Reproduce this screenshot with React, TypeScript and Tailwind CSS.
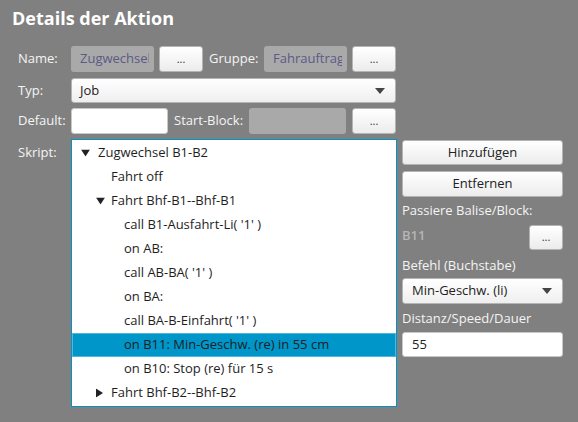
const font = { fontFamily: '"Open Sans", "Noto Sans", sans-serif' };

function DotsButton({ className = '' }: { className?: string }) {
  return (
    <button
      className={`flex items-center justify-center rounded-[3px] border border-[#b4b4b4] bg-gradient-to-b from-white to-[#ececec] pb-[2px] text-[11px] leading-none text-[#333] ${className}`}
    >
      ...
    </button>
  );
}

function Arrow({ open }: { open: boolean }) {
  return open ? (
    <svg width="9" height="7" viewBox="0 0 9 7" className="shrink-0">
      <path d="M0 0 H9 L4.5 7 Z" fill="#222" />
    </svg>
  ) : (
    <svg width="7" height="9" viewBox="0 0 7 9" className="shrink-0">
      <path d="M0 0 V9 L7 4.5 Z" fill="#222" />
    </svg>
  );
}

type Row = { level: number; text: string; arrow?: 'open' | 'closed'; selected?: boolean };

const rows: Row[] = [
  { level: 0, text: 'Zugwechsel B1-B2', arrow: 'open' },
  { level: 1, text: 'Fahrt off' },
  { level: 1, text: 'Fahrt Bhf-B1--Bhf-B1', arrow: 'open' },
  { level: 2, text: "call B1-Ausfahrt-Li( '1' )" },
  { level: 2, text: 'on AB:' },
  { level: 2, text: "call AB-BA( '1' )" },
  { level: 2, text: 'on BA:' },
  { level: 2, text: "call BA-B-Einfahrt( '1' )" },
  { level: 2, text: 'on B11: Min-Geschw. (re) in 55 cm', selected: true },
  { level: 2, text: 'on B10: Stop (re) für 15 s' },
  { level: 1, text: 'Fahrt Bhf-B2--Bhf-B2', arrow: 'closed' },
];

const textLeft = [26, 39, 52];
const arrowLeft = [9, 24, 24];

function ReadOnly({ text, className = '' }: { text?: string; className?: string }) {
  return (
    <div className={`flex h-[26px] items-center overflow-hidden rounded-[3px] bg-[#a9a9a9] pl-[9px] pr-[5px] text-[#5b5a86] ${className}`}>
      <span className="block min-w-0 overflow-hidden whitespace-nowrap">{text}</span>
    </div>
  );
}

export default function App() {
  return (
    <div className="h-[422px] w-[578px] overflow-hidden bg-[#808080] text-[13px] text-[#f4f4f4]" style={font}>
      <h1 className="ml-[12px] mt-[5px] text-[18px] font-bold leading-[26px] text-white">Details der Aktion</h1>

      <div className="ml-[18px] mt-[15px] flex flex-col">
        {/* Name / Gruppe */}
        <div className="flex h-[26px] items-center">
          <span className="w-[53px]">Name:</span>
          <ReadOnly text="Zugwechsel B1-B2" className="w-[83px]" />
          <DotsButton className="ml-[5px] h-[26px] w-[44px]" />
          <span className="ml-[6px] w-[55px]">Gruppe:</span>
          <ReadOnly text="Fahrauftrag" className="w-[83px]" />
          <DotsButton className="ml-[5px] h-[26px] w-[44px]" />
        </div>

        {/* Typ */}
        <div className="mt-[6px] flex h-[25px] items-center">
          <span className="w-[53px]">Typ:</span>
          <div className="flex h-[25px] w-[325px] items-center justify-between rounded-[3px] border border-[#b4b4b4] bg-gradient-to-b from-white to-[#efefef] pl-[8px] pr-[10px] text-[#222]">
            <span>Job</span>
            <svg width="10" height="6" viewBox="0 0 10 6">
              <path d="M0 0 H10 L5 6 Z" fill="#444" />
            </svg>
          </div>
        </div>

        {/* Default / Start-Block */}
        <div className="mt-[5px] flex h-[26px] items-center">
          <span className="w-[53px]">Default:</span>
          <div className="h-[26px] w-[97px] rounded-[3px] border border-[#c8c8c8] bg-white" />
          <span className="ml-[6px] w-[75px]">Start-Block:</span>
          <ReadOnly className="w-[97px]" />
          <DotsButton className="ml-[6px] h-[26px] w-[44px]" />
        </div>

        {/* Skript */}
        <div className="mt-[5px] flex">
          <span className="w-[53px] pt-[4px] leading-[18px]">Skript:</span>
          <div className="h-[268px] w-[326px] border border-[#0095c9] bg-white pt-[1px] text-[#1e1e1e]">
            {rows.map((r, i) => (
              <div
                key={i}
                className={`relative flex h-[24px] items-center whitespace-nowrap ${
                  r.selected ? 'border border-[#4fb6dc] bg-[#0096c9]' : ''
                }`}
              >
                {r.arrow && (
                  <span className="absolute top-1/2 flex -translate-y-1/2 items-center" style={{ left: arrowLeft[r.level] }}>
                    <Arrow open={r.arrow === 'open'} />
                  </span>
                )}
                <span style={{ marginLeft: textLeft[r.level] - (r.selected ? 1 : 0) }}>{r.text}</span>
              </div>
            ))}
          </div>

          <div className="ml-[5px] flex w-[161px] flex-col">
            <button className="mt-[1px] h-[25px] rounded-[3px] border border-[#b4b4b4] bg-gradient-to-b from-white to-[#ececec] text-[#222]">
              Hinzufügen
            </button>
            <button className="mt-[6px] h-[26px] rounded-[3px] border border-[#b4b4b4] bg-gradient-to-b from-white to-[#ececec] text-[#222]">
              Entfernen
            </button>
            <span className="mt-[4px] leading-[18px]">Passiere Balise/Block:</span>
            <div className="mt-[6px] flex h-[25px] items-start justify-between">
              <span className="mt-[1px] font-semibold leading-[18px] text-[#b5b5b5]">B11</span>
              <DotsButton className="h-[25px] w-[34px]" />
            </div>
            <span className="mt-[6px] leading-[18px]">Befehl (Buchstabe)</span>
            <div className="mt-[4px] flex h-[26px] items-center justify-between rounded-[3px] border border-[#b4b4b4] bg-gradient-to-b from-white to-[#efefef] pl-[9px] pr-[10px] text-[#222]">
              <span>Min-Geschw. (li)</span>
              <svg width="10" height="6" viewBox="0 0 10 6">
                <path d="M0 0 H10 L5 6 Z" fill="#444" />
              </svg>
            </div>
            <span className="mt-[5px] leading-[18px]">Distanz/Speed/Dauer</span>
            <div className="mt-[5px] flex h-[25px] items-center rounded-[3px] border border-[#c8c8c8] bg-white pl-[9px] text-[#222]">
              55
            </div>
          </div>
        </div>
      </div>
    </div>
  );
}
